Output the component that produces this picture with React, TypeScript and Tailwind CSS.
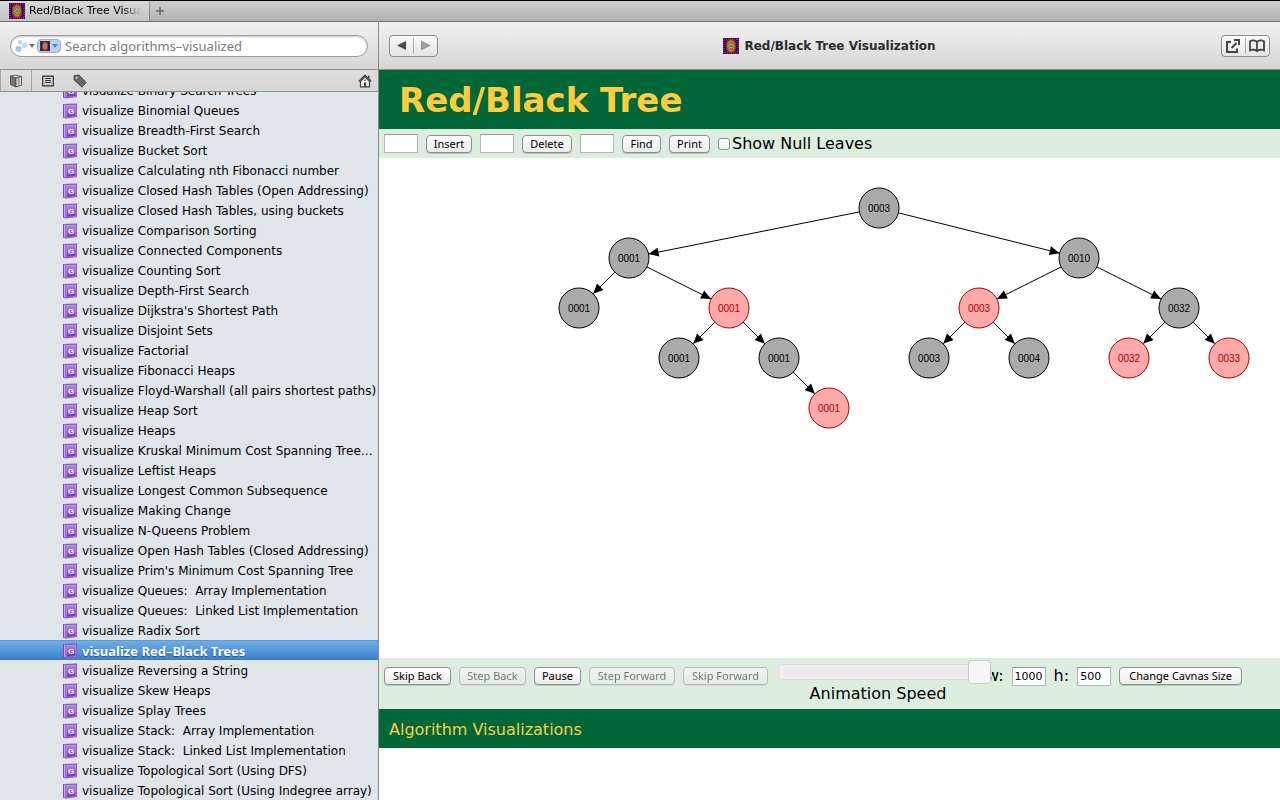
import React from "react";

const UI = "font-['Noto_Sans','Liberation_Sans',sans-serif]";
const PAGE = "font-['DejaVu_Sans','Liberation_Sans',sans-serif]";

const entries = [
  "Binary Search Trees",
  "Binomial Queues",
  "Breadth-First Search",
  "Bucket Sort",
  "Calculating nth Fibonacci number",
  "Closed Hash Tables (Open Addressing)",
  "Closed Hash Tables, using buckets",
  "Comparison Sorting",
  "Connected Components",
  "Counting Sort",
  "Depth-First Search",
  "Dijkstra's Shortest Path",
  "Disjoint Sets",
  "Factorial",
  "Fibonacci Heaps",
  "Floyd-Warshall (all pairs shortest paths)",
  "Heap Sort",
  "Heaps",
  "Kruskal Minimum Cost Spanning Tree…",
  "Leftist Heaps",
  "Longest Common Subsequence",
  "Making Change",
  "N-Queens Problem",
  "Open Hash Tables (Closed Addressing)",
  "Prim's Minimum Cost Spanning Tree",
  "Queues:  Array Implementation",
  "Queues:  Linked List Implementation",
  "Radix Sort",
  "Red–Black Trees",
  "Reversing a String",
  "Skew Heaps",
  "Splay Trees",
  "Stack:  Array Implementation",
  "Stack:  Linked List Implementation",
  "Topological Sort (Using DFS)",
  "Topological Sort (Using Indegree array)",
];

type TreeNode = { x: number; y: number; label: string; red?: boolean };

const nodes: TreeNode[] = [
  { x: 500, y: 50, label: "0003" },
  { x: 250, y: 100, label: "0001" },
  { x: 700, y: 100, label: "0010" },
  { x: 200, y: 150, label: "0001" },
  { x: 350, y: 150, label: "0001", red: true },
  { x: 600, y: 150, label: "0003", red: true },
  { x: 800, y: 150, label: "0032" },
  { x: 300, y: 200, label: "0001" },
  { x: 400, y: 200, label: "0001" },
  { x: 550, y: 200, label: "0003" },
  { x: 650, y: 200, label: "0004" },
  { x: 750, y: 200, label: "0032", red: true },
  { x: 850, y: 200, label: "0033", red: true },
  { x: 450, y: 250, label: "0001", red: true },
];

const edges: [number, number][] = [
  [0, 1], [0, 2], [1, 3], [1, 4], [2, 5], [2, 6],
  [4, 7], [4, 8], [5, 9], [5, 10], [6, 11], [6, 12], [8, 13],
];

function Swirl({ className }: { className: string }) {
  return (
    <svg viewBox="0 0 16 16" className={className} aria-hidden="true">
      <rect width="16" height="16" fill="#2a0a3c" />
      <rect x="1" y="1" width="14" height="14" fill="none" stroke="#7a1fae" strokeWidth="2" strokeDasharray="1 1" />
      <rect x="3" y="1" width="10" height="14" rx="4" fill="#8a1c3c" />
      <ellipse cx="8" cy="8" rx="4.6" ry="6.6" fill="#b5471c" />
      <ellipse cx="8" cy="8" rx="3.6" ry="5.4" fill="#a89416" />
      <ellipse cx="8" cy="8" rx="2.5" ry="4" fill="#6f7a2a" />
      <ellipse cx="8" cy="8" rx="1.7" ry="2.8" fill="#b9b0a8" />
      <ellipse cx="8" cy="8" rx="0.8" ry="1.5" fill="#4a5a9a" />
    </svg>
  );
}

function BookIcon() {
  return (
    <svg viewBox="0 0 14 16" className="h-4 w-3.5 shrink-0" aria-hidden="true">
      <defs>
        <linearGradient id="cover" x1="0" y1="0" x2="0" y2="1">
          <stop offset="0" stopColor="#b48ae0" />
          <stop offset="1" stopColor="#6d31b8" />
        </linearGradient>
      </defs>
      <path d="M0 1 L14 0.5 V14 L3 15.5 L0 14.5 Z" fill="#7a45b8" />
      <path d="M1 1.5 H2.4 V14.6 L1 14 Z" fill="#c9a8ea" />
      <path d="M3.4 2 H13 V13.4 L3.4 14.4 Z" fill="url(#cover)" stroke="#c7a5ea" strokeWidth="0.6" />
      <text x="8" y="11" textAnchor="middle" fill="#fff" className="font-['Liberation_Sans',sans-serif] text-[8px] font-bold">
        G
      </text>
    </svg>
  );
}

function Btn({ children, width, disabled = false }: { children: React.ReactNode; width: string; disabled?: boolean }) {
  return (
    <button
      type="button"
      disabled={disabled}
      className={`${UI} ${width} flex h-[18px] shrink-0 items-center justify-center rounded-[4px] border border-[#8b918c] bg-linear-to-b from-white via-[#f4f4f4] via-50% to-[#ebebeb] text-[11px] leading-4 whitespace-nowrap text-black shadow-[0_1px_0_#b9c6bb] disabled:opacity-50`}
    >
      {children}
    </button>
  );
}

function Field({ label, value = "" }: { label: string; value?: string }) {
  return (
    <input
      type="text"
      aria-label={label}
      defaultValue={value}
      className={`${PAGE} h-[19px] w-[34px] shrink-0 border border-[#b4b8b5] border-t-[#999] bg-white px-0.5 text-[11px] leading-4 text-black outline-none`}
    />
  );
}

function Sidebar() {
  return (
    <aside className={`${PAGE} flex w-[379px] shrink-0 flex-col border-r border-[#8a8a8a] bg-[#e0e5e9]`}>
      <div className="flex h-12 shrink-0 items-center border-b border-[#8f8f8f] bg-linear-to-b from-[#f1f1f1] to-[#d6d6d6] px-2.5">
        <div className="flex h-[22px] w-full items-center rounded-full border border-[#9c9c9c] bg-white px-1 shadow-[inset_0_1px_2px_#c4c4c4]">
          <svg viewBox="0 0 20 14" className="h-3.5 w-5 shrink-0" aria-hidden="true">
            <circle cx="3.5" cy="10" r="3" fill="#a9c4e6" />
            <circle cx="5" cy="3" r="2.2" fill="#b5dcf2" />
            <circle cx="9.5" cy="6.5" r="2.8" fill="#bfe0f4" />
            <path d="M14 5 H20 L17 9 Z" fill="#777" />
          </svg>
          <span className="ml-0.5 flex h-3.5 w-6 shrink-0 items-center justify-between rounded-[4px] border border-[#8db3da] bg-[#b5d2ee] px-0.5">
            <Swirl className="h-2.5 w-2.5" />
            <svg viewBox="0 0 6 4" className="h-1 w-1.5" aria-hidden="true">
              <path d="M0 0 H6 L3 4 Z" fill="#5c7fa5" />
            </svg>
          </span>
          <input
            type="search"
            aria-label="Search"
            placeholder="Search algorithms–visualized"
            className={`${UI} ml-1 min-w-0 flex-1 bg-transparent text-[13px] leading-5 text-black outline-none placeholder:text-[#7b7b7b]`}
          />
        </div>
      </div>
      <div className="flex h-[22px] shrink-0 items-center border-b border-[#8f8f8f] bg-linear-to-b from-[#dedede] to-[#d6d6d6] pr-1.5">
        <button type="button" aria-label="Library" className="flex h-full w-8 items-center justify-center border-x border-[#a5a5a5]">
          <svg viewBox="0 0 14 14" className="h-3.5 w-3.5">
            <path d="M1.5 2 L7 4 V13 L1.5 10.5 Z" fill="#777" stroke="#444" strokeWidth="0.8" />
            <path d="M1.5 2 L6.5 1 L12.5 2.5 L7 4 Z" fill="#ddd" stroke="#444" strokeWidth="0.8" />
            <path d="M7 4 L12.5 2.5 V11.2 L7 13 Z" fill="#d4d4d4" stroke="#444" strokeWidth="0.8" />
            <path d="M9.8 3.6 V12" stroke="#666" strokeWidth="0.8" />
          </svg>
        </button>
        <button type="button" aria-label="Contents" className="flex h-full w-8 items-center justify-center">
          <svg viewBox="0 0 12 12" className="h-3 w-3">
            <rect x="0.7" y="1.2" width="10.6" height="9.6" fill="#d8d8d8" stroke="#444" strokeWidth="1.4" />
            <path d="M3 3.5 H9 M3 5.5 H9 M3 7.5 H9" stroke="#333" strokeWidth="1" />
          </svg>
        </button>
        <button type="button" aria-label="Bookmarks" className="flex h-full w-8 items-center justify-center">
          <svg viewBox="0 0 14 14" className="h-3.5 w-3.5">
            <path d="M1 1.5 L6 1 L13.3 8.5 L9 13.2 L1 6 Z" fill="#666" stroke="#444" strokeWidth="0.8" />
            <circle cx="3.6" cy="3.8" r="1.1" fill="#ddd" />
          </svg>
        </button>
        <button type="button" aria-label="Home" className="ml-auto flex h-full items-center">
          <svg viewBox="0 0 14 14" className="h-3.5 w-3.5">
            <path d="M0.7 7.4 L7 1.2 L13.3 7.4 M10.8 4.6 V1.6" fill="none" stroke="#444" strokeWidth="1.4" />
            <path d="M2.5 7.2 V12.8 H11.5 V7.2 L7 2.9 Z" fill="#eee" stroke="#444" strokeWidth="1.2" />
            <rect x="5.9" y="8.4" width="2.2" height="4.4" fill="#444" />
            <path d="M6 6.2 H8" stroke="#444" strokeWidth="1" />
          </svg>
        </button>
      </div>
      <nav className="min-h-0 flex-1 overflow-hidden">
        <ul className="-mt-3">
          {entries.map((name) => {
            const active = name.startsWith("Red");
            return (
              <li key={name}>
                <a
                  href="#"
                  className={
                    active
                      ? `${UI} flex h-5 items-center gap-[5px] border-t border-[#5a9bd8] bg-linear-to-b from-[#6cb0e6] to-[#3b7dcb] pl-[63px] text-[13px] leading-5 font-bold text-white [text-shadow:0_1px_1px_#27548c]`
                      : "flex h-5 items-center gap-[5px] border-t border-transparent pl-[63px] text-[12px] leading-5 text-black"
                  }
                >
                  <BookIcon />
                  <span className="whitespace-pre">visualize {name}</span>
                </a>
              </li>
            );
          })}
        </ul>
      </nav>
    </aside>
  );
}

function Tree() {
  return (
    <div className="h-[500px] shrink-0 overflow-hidden bg-white">
      <svg width="1000" height="500" viewBox="0 0 1000 500" role="img" aria-label="Red/Black Tree">
        {edges.map(([from, to]) => {
          const a = nodes[from];
          const b = nodes[to];
          const len = Math.hypot(b.x - a.x, b.y - a.y);
          const ux = (b.x - a.x) / len;
          const uy = (b.y - a.y) / len;
          const tx = b.x - ux * 20;
          const ty = b.y - uy * 20;
          const bx = tx - ux * 10;
          const by = ty - uy * 10;
          return (
            <g key={`${from}-${to}`}>
              <line x1={a.x + ux * 20} y1={a.y + uy * 20} x2={tx} y2={ty} stroke="#000" />
              <polygon points={`${tx},${ty} ${bx - uy * 4.5},${by + ux * 4.5} ${bx + uy * 4.5},${by - ux * 4.5}`} />
            </g>
          );
        })}
        {nodes.map((n) => (
          <g key={`${n.x}-${n.y}`}>
            <circle cx={n.x} cy={n.y} r="20" fill={n.red ? "#ffaaaa" : "#aaaaaa"} stroke={n.red ? "#aa0000" : "#000"} />
            <text
              x={n.x}
              y={n.y + 4}
              textAnchor="middle"
              fill={n.red ? "#aa0000" : "#000"}
              className="font-['Liberation_Sans',sans-serif] text-[10px]"
            >
              {n.label}
            </text>
          </g>
        ))}
      </svg>
    </div>
  );
}

export default function App() {
  return (
    <div className="flex h-screen flex-col overflow-hidden border-t border-black bg-white">
      <div className={`${PAGE} flex h-[21px] shrink-0 border-b border-[#6e6e6e] bg-linear-to-b from-[#cfcfcf] to-[#b0b0b0]`}>
        <div className="flex w-[150px] items-center gap-1 overflow-hidden border-r border-[#8a8a8a] bg-linear-to-b from-[#d8d8d8] to-[#c4c4c4] pr-2 pl-[9px]">
          <Swirl className="h-4 w-4 shrink-0" />
          <span className="overflow-hidden bg-linear-to-r from-black from-85% to-transparent bg-clip-text text-[11px] leading-5 whitespace-nowrap text-transparent">
            Red/Black Tree Visualization
          </span>
        </div>
        <button type="button" aria-label="New tab" className="flex w-5 items-center justify-center">
          <svg viewBox="0 0 8 8" className="h-2 w-2">
            <path d="M4 0 V8 M0 4 H8" stroke="#666" strokeWidth="1.4" />
          </svg>
        </button>
      </div>

      <div className="flex min-h-0 flex-1">
        <Sidebar />

        <div className="flex min-w-0 flex-1 flex-col">
          <div className="flex h-12 shrink-0 items-center justify-between border-b border-[#8f8f8f] bg-linear-to-b from-[#f1f1f1] to-[#d6d6d6] px-2.5">
            <div className="flex h-[22px] w-[49px] items-center rounded-[4px] border border-[#8e8e8e] bg-linear-to-b from-[#fafafa] to-[#e4e4e4]">
              <button type="button" aria-label="Back" className="flex flex-1 justify-center">
                <svg viewBox="0 0 10 9" className="h-[9px] w-2.5">
                  <path d="M0 4.5 L9 0 V9 Z" fill="#4a4a4a" />
                </svg>
              </button>
              <span className="h-4 w-px bg-[#b0b0b0]" />
              <button type="button" aria-label="Forward" className="flex flex-1 justify-center">
                <svg viewBox="0 0 10 9" className="h-[9px] w-2.5">
                  <path d="M9 4.5 L0 0 V9 Z" fill="#a0a0a0" stroke="#777" strokeWidth="0.6" />
                </svg>
              </button>
            </div>
            <div className="flex items-center gap-[5px]">
              <Swirl className="h-4 w-4" />
              <span className={`${PAGE} text-[12px] leading-5 font-bold text-[#2c2c2c]`}>Red/Black Tree Visualization</span>
            </div>
            <div className="flex h-[22px] w-[49px] items-center rounded-[4px] border border-[#8e8e8e] bg-linear-to-b from-[#fafafa] to-[#e4e4e4]">
              <button type="button" aria-label="Open externally" className="flex flex-1 justify-center">
                <svg viewBox="0 0 14 14" className="h-3.5 w-3.5" fill="none" stroke="#444" strokeWidth="2">
                  <path d="M5 3 H1 V13 H11 V9.5" />
                  <path d="M5.5 9 L10.5 4" />
                  <path d="M8 1 H13 V6" />
                </svg>
              </button>
              <span className="h-4 w-px bg-[#b0b0b0]" />
              <button type="button" aria-label="Bookmarks" className="flex flex-1 justify-center">
                <svg viewBox="0 0 16 14" className="h-3.5 w-4" fill="none" stroke="#444" strokeWidth="1.8">
                  <path d="M8 3 C6.5 1 3 1 1 2.2 V11.4 C3 10.4 6.5 10.4 8 12.2 C9.5 10.4 13 10.4 15 11.4 V2.2 C13 1 9.5 1 8 3 V12.6" />
                </svg>
              </button>
            </div>
          </div>

          <main className={`${PAGE} flex flex-col text-[16px] leading-5 text-black`}>
            <h1 className="flex h-[59px] shrink-0 items-center bg-[#006838] px-5 text-[34px] leading-10 font-bold text-[#ffcc40]">
              Red/Black Tree
            </h1>

            <div className="flex h-[29px] shrink-0 items-center gap-2 bg-[#ddeedf] px-[5px]">
              <Field label="Value to insert" />
              <Btn width="w-[46px]">Insert</Btn>
              <Field label="Value to delete" />
              <Btn width="w-[50px]">Delete</Btn>
              <Field label="Value to find" />
              <Btn width="w-[39px]">Find</Btn>
              <Btn width="w-[41px]">Print</Btn>
              <label className="flex items-center gap-0.5">
                <input
                  type="checkbox"
                  className="h-3 w-3 appearance-none rounded-[3px] border border-[#8b918c] bg-linear-to-b from-white to-[#eee]"
                />
                Show Null Leaves
              </label>
            </div>

            <Tree />

            <div className="flex h-[51px] shrink-0 items-start gap-2 bg-[#ddeedf] px-[5px] pt-2">
              <div className="flex h-5 items-center gap-2">
                <Btn width="w-[67px]">Skip Back</Btn>
                <Btn width="w-[67px]" disabled>Step Back</Btn>
                <Btn width="w-[47px]">Pause</Btn>
                <Btn width="w-[86px]" disabled>Step Forward</Btn>
                <Btn width="w-[85px]" disabled>Skip Forward</Btn>
              </div>
              <label className="relative z-10 ml-0.5 flex w-[200px] shrink-0 flex-col items-center">
                <input
                  type="range"
                  min={0}
                  max={100}
                  defaultValue={100}
                  className="-mt-1.5 h-6 w-[214px] shrink-0 cursor-pointer appearance-none self-start bg-transparent [&::-webkit-slider-runnable-track]:h-4 [&::-webkit-slider-runnable-track]:rounded-[4px] [&::-webkit-slider-runnable-track]:border [&::-webkit-slider-runnable-track]:border-[#dddddd] [&::-webkit-slider-runnable-track]:bg-[#eeeeee] [&::-webkit-slider-thumb]:-mt-[5px] [&::-webkit-slider-thumb]:h-6 [&::-webkit-slider-thumb]:w-[23px] [&::-webkit-slider-thumb]:appearance-none [&::-webkit-slider-thumb]:rounded-[4px] [&::-webkit-slider-thumb]:border [&::-webkit-slider-thumb]:border-[#cccccc] [&::-webkit-slider-thumb]:bg-[#f6f6f6]"
                />
                Animation Speed
              </label>
              <div className="flex h-5 items-center gap-2">
                <span>w:</span>
                <Field label="Canvas width" value="1000" />
                <span>h:</span>
                <Field label="Canvas height" value="500" />
                <Btn width="w-[123px]">Change Cavnas Size</Btn>
              </div>
            </div>

            <div className="flex h-[39px] shrink-0 items-center bg-[#006838] px-2.5 pt-0.5">
              <a href="#" className="text-[16px] leading-5 text-[#ffcc40]">
                Algorithm Visualizations
              </a>
            </div>
          </main>
        </div>
      </div>
    </div>
  );
}
